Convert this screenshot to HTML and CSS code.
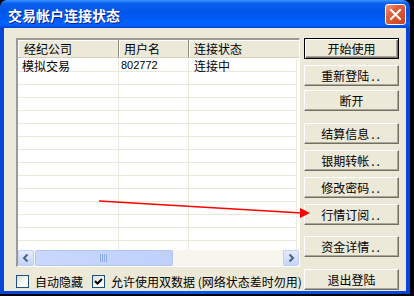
FILE: index.html
```html
<!DOCTYPE html>
<html lang="zh-CN">
<head>
  <meta charset="UTF-8">
  <title>交易帐户连接状态</title>
  <link rel="stylesheet" href="styles.css">
</head>
<body>
  <div class="window">
    <div class="titlebar">
      <span class="title">交易帐户连接状态</span>
      <button class="close" title="关闭">
        <svg width="13" height="13" viewBox="0 0 13 13">
          <path d="M2 2 L11 11 M11 2 L2 11" stroke="#fff" stroke-width="2" stroke-linecap="square" />
        </svg>
      </button>
    </div>
    <div class="frame">
      <div class="client">
        <div class="main">
          <div class="listview">
            <div class="lv-head">
              <div class="hc c1">经纪公司</div>
              <div class="hc c2">用户名</div>
              <div class="hc c3">连接状态</div>
            </div>
            <div class="lv-rows">
              <div class="row">
                <div class="cell c1">模拟交易</div>
                <div class="cell c2 num">802772</div>
                <div class="cell c3">连接中</div>
              </div>
              <div class="row"><div class="cell c1"></div><div class="cell c2"></div><div class="cell c3"></div></div>
              <div class="row"><div class="cell c1"></div><div class="cell c2"></div><div class="cell c3"></div></div>
              <div class="row"><div class="cell c1"></div><div class="cell c2"></div><div class="cell c3"></div></div>
              <div class="row"><div class="cell c1"></div><div class="cell c2"></div><div class="cell c3"></div></div>
              <div class="row"><div class="cell c1"></div><div class="cell c2"></div><div class="cell c3"></div></div>
              <div class="row"><div class="cell c1"></div><div class="cell c2"></div><div class="cell c3"></div></div>
              <div class="row"><div class="cell c1"></div><div class="cell c2"></div><div class="cell c3"></div></div>
              <div class="row"><div class="cell c1"></div><div class="cell c2"></div><div class="cell c3"></div></div>
              <div class="row"><div class="cell c1"></div><div class="cell c2"></div><div class="cell c3"></div></div>
              <div class="row"><div class="cell c1"></div><div class="cell c2"></div><div class="cell c3"></div></div>
              <div class="row"><div class="cell c1"></div><div class="cell c2"></div><div class="cell c3"></div></div>
              <div class="row"><div class="cell c1"></div><div class="cell c2"></div><div class="cell c3"></div></div>
              <div class="row"><div class="cell c1"></div><div class="cell c2"></div><div class="cell c3"></div></div>
              <div class="row"><div class="cell c1"></div><div class="cell c2"></div><div class="cell c3"></div></div>
            </div>
            <div class="hscroll">
              <div class="sb-btn">
                <svg width="14" height="14" viewBox="0 0 14 14"><path d="M8.5 3.5 L5 7 L8.5 10.5" fill="none" stroke="#4d6185" stroke-width="2" /></svg>
              </div>
              <div class="sb-track">
                <div class="sb-thumb">
                  <svg width="8" height="8" viewBox="0 0 8 8">
                    <path d="M0.5 0 V8 M2.5 0 V8 M4.5 0 V8 M6.5 0 V8" stroke="#8eabf0" stroke-width="1" />
                  </svg>
                </div>
              </div>
              <div class="sb-btn">
                <svg width="14" height="14" viewBox="0 0 14 14"><path d="M5.5 3.5 L9 7 L5.5 10.5" fill="none" stroke="#4d6185" stroke-width="2" /></svg>
              </div>
            </div>
          </div>
          <div class="opts">
            <label class="check"><span class="box"></span>自动隐藏</label>
            <label class="check"><span class="box">
              <svg width="11" height="11" viewBox="0 0 11 11"><path d="M2 5 L4.5 7.5 L9 3" fill="none" stroke="#000" stroke-width="2" /></svg>
            </span>允许使用双数据 (网络状态差时勿用)</label>
          </div>
        </div>
        <div class="side">
          <button class="btn default">开始使用</button>
          <button class="btn mt6">重新登陆<span class="dots">..</span></button>
          <button class="btn mt4">断开</button>
          <button class="btn mt12">结算信息<span class="dots">..</span></button>
          <button class="btn mt6">银期转帐<span class="dots">..</span></button>
          <button class="btn mt6">修改密码<span class="dots">..</span></button>
          <button class="btn mt6">行情订阅<span class="dots">..</span></button>
          <button class="btn mt11">资金详情<span class="dots">..</span></button>
          <button class="btn mt12">退出登陆</button>
        </div>
      </div>
    </div>
    <svg class="arrow" width="320" height="230" viewBox="0 0 320 230">
      <path d="M99 201 L302 213" stroke="#ff0000" stroke-width="1.6" fill="none" />
      <path d="M300 208 L310 213 L300 218 Z" fill="#ff0000" />
    </svg>
  </div>
</body>
</html>
```

FILE: styles.css
```css
body {
  margin: 0;
  background-color: #000;
  font-family: "Noto Sans CJK SC", "Liberation Sans", sans-serif;
  font-size: 12px;
}
.window {
  position: relative;
  width: 410px;
  height: 294px;
  display: flex;
  flex-direction: column;
  border-radius: 7px 7px 0 0;
  overflow: hidden;
}
.titlebar {
  height: 28px;
  display: flex;
  align-items: center;
  justify-content: space-between;
  padding: 0 4px 0 8px;
  background: linear-gradient(to bottom, #3d95ff 0%, #0a5ff0 12%, #0055ea 45%, #0063ff 85%, #0058f0 93%, #0040cf 100%);
}
.title {
  color: #fff;
  font-size: 14px;
  font-weight: bold;
  text-shadow: 1px 1px #0a1e8c;
  margin-top: 1px;
}
.close {
  width: 21px;
  height: 21px;
  padding: 0;
  display: flex;
  align-items: center;
  justify-content: center;
  border: 1px solid #fff;
  border-radius: 3px;
  background: linear-gradient(135deg, #f09a7e 0%, #e0603c 35%, #c8401a 100%);
}
.frame {
  flex: 1;
  display: flex;
  padding: 0 4px 3px;
  background: linear-gradient(to right, #0845d8, #0058ee 50%, #0845d8);
}
.client {
  flex: 1;
  display: flex;
  padding: 10px 0 0 12px;
  background-color: #ece9d8;
}
.main {
  width: 284px;
  display: flex;
  flex-direction: column;
}
.listview {
  height: 229px;
  box-sizing: border-box;
  display: flex;
  flex-direction: column;
  border-style: solid;
  border-width: 2px 1px 1px 2px;
  border-color: #9b9a96 #fff #fff #9b9a96;
  background-color: #fff;
  overflow: hidden;
}
.lv-head {
  display: flex;
  height: 18px;
  background-color: #ece9d8;
}
.hc {
  box-sizing: border-box;
  padding-left: 5px;
  line-height: 17px;
  border-right: 1px solid #8f8c80;
  border-bottom: 1px solid #d6d2c2;
  box-shadow: inset 1px 1px #fff;
}
.hc.c1 {
  padding-left: 6px;
}
.hc.c3 {
  flex: 1;
  border-right: none;
}
.c1 {
  width: 101px;
}
.c2 {
  width: 70px;
}
.c3 {
  flex: 1;
}
.lv-rows {
  flex: 1;
  padding-top: 1px;
  overflow: hidden;
}
.row {
  display: flex;
  height: 13px;
}
.cell {
  height: 13px;
  line-height: 13px;
  padding-left: 5px;
  box-sizing: border-box;
  box-shadow: inset 0 -1px #ebe8dc, inset -1px 0 #ebe8dc;
  white-space: nowrap;
}
.cell.c1 {
  padding-left: 4px;
}
.cell.c3 {
  margin-right: 2px;
}
.num {
  font-family: "Liberation Sans", sans-serif;
  font-size: 11px;
  padding-left: 2px;
}
.hscroll {
  height: 16px;
  display: flex;
  background-color: #f7f5ee;
}
.sb-btn {
  width: 14px;
  height: 14px;
  border: 1px solid #c0cff7;
  border-radius: 2px;
  background: linear-gradient(to bottom, #e4ecfe, #c3d4fc);
  display: flex;
}
.sb-track {
  flex: 1;
  padding-left: 1px;
}
.sb-thumb {
  width: 136px;
  height: 14px;
  border: 1px solid #b1c5f5;
  border-radius: 2px;
  background: linear-gradient(to right, #c9d8fc, #bfd0fb);
  display: flex;
  align-items: center;
  justify-content: center;
}
.opts {
  display: flex;
  gap: 9px;
  margin-top: 8px;
}
.check {
  display: flex;
  align-items: center;
  gap: 6px;
  line-height: 13px;
  white-space: nowrap;
}
.box {
  width: 11px;
  height: 11px;
  border: 1px solid #1c5180;
  background: linear-gradient(135deg, #dcdcd7, #fff 70%);
  display: flex;
}
.side {
  width: 95px;
  margin-left: 4px;
  display: flex;
  flex-direction: column;
}
.btn {
  height: 21px;
  padding: 0;
  font-family: inherit;
  font-size: 12px;
  color: #000;
  background-color: #ece9d8;
  border: 1px solid;
  border-color: #fff #716f64 #716f64 #fff;
  box-shadow: inset -1px -1px #aca899;
}
.btn.default {
  border-color: #000;
  box-shadow: inset 1px 1px #fff, inset -1px -1px #716f64, inset -2px -2px #aca899;
}
.dots {
  letter-spacing: 2px;
  margin-left: 2px;
}
.mt4 { margin-top: 4px; }
.mt6 { margin-top: 6px; }
.mt11 { margin-top: 11px; }
.mt12 { margin-top: 12px; }
.arrow {
  position: absolute;
  left: 0;
  top: 0;
  pointer-events: none;
}
```
